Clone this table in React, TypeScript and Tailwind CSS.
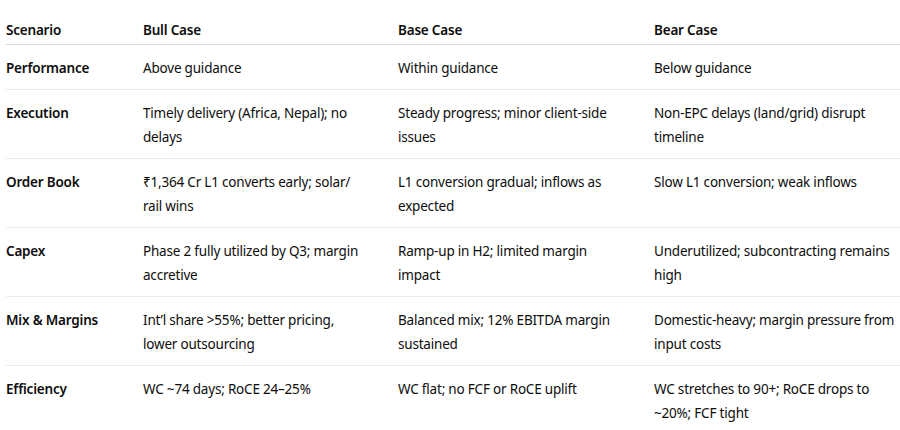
// each cell is a list of lines, broken as in the source table
const rows: string[][][] = [
  [['Performance'], ['Above guidance'], ['Within guidance'], ['Below guidance']],
  [
    ['Execution'],
    ['Timely delivery (Africa, Nepal); no', 'delays'],
    ['Steady progress; minor client-side', 'issues'],
    ['Non-EPC delays (land/grid) disrupt', 'timeline'],
  ],
  [
    ['Order Book'],
    ['₹1,364 Cr L1 converts early; solar/', 'rail wins'],
    ['L1 conversion gradual; inflows as', 'expected'],
    ['Slow L1 conversion; weak inflows'],
  ],
  [
    ['Capex'],
    ['Phase 2 fully utilized by Q3; margin', 'accretive'],
    ['Ramp-up in H2; limited margin', 'impact'],
    ['Underutilized; subcontracting remains', 'high'],
  ],
  [
    ['Mix & Margins'],
    ['Int’l share >55%; better pricing,', 'lower outsourcing'],
    ['Balanced mix; 12% EBITDA margin', 'sustained'],
    ['Domestic-heavy; margin pressure from', 'input costs'],
  ],
  [
    ['Efficiency'],
    ['WC ~74 days; RoCE 24–25%'],
    ['WC flat; no FCF or RoCE uplift'],
    ['WC stretches to 90+; RoCE drops to', '~20%; FCF tight'],
  ],
];

function Lines({ lines }: { lines: string[] }) {
  return (
    <>
      {lines.map((l, i) => (
        <span key={i} className="block">
          {l}
        </span>
      ))}
    </>
  );
}

export default function App() {
  return (
    <div
      className="w-[900px] h-[430px] bg-white pl-[6px] pt-[7px] overflow-hidden text-[13.5px] tracking-[-0.2px] leading-6 text-[#0d0d0d]"
      style={{ fontFamily: '"Noto Sans", "Open Sans", sans-serif' }}
    >
      <table className="w-[940px] table-fixed border-collapse">
        <colgroup>
          <col className="w-[137px]" />
          <col className="w-[255px]" />
          <col className="w-[256px]" />
          <col />
        </colgroup>
        <thead>
          <tr className="border-b border-[#d6d6d6]">
            {['Scenario', 'Bull Case', 'Base Case', 'Bear Case'].map((h) => (
              <th key={h} className="text-left font-semibold pt-[11px] pb-[2px] pr-4 align-top whitespace-nowrap">
                {h}
              </th>
            ))}
          </tr>
        </thead>
        <tbody>
          {rows.map((r, i) => (
            <tr
              key={r[0][0]}
              className={i < rows.length - 1 ? 'border-b border-[#ececec]' : ''}
            >
              {r.map((cell, j) => (
                <td
                  key={j}
                  className={`pt-[11px] pb-[9px] pr-4 align-top whitespace-nowrap ${
                    j === 0 ? 'font-semibold' : ''
                  }`}
                >
                  <Lines lines={cell} />
                </td>
              ))}
            </tr>
          ))}
        </tbody>
      </table>
    </div>
  );
}
